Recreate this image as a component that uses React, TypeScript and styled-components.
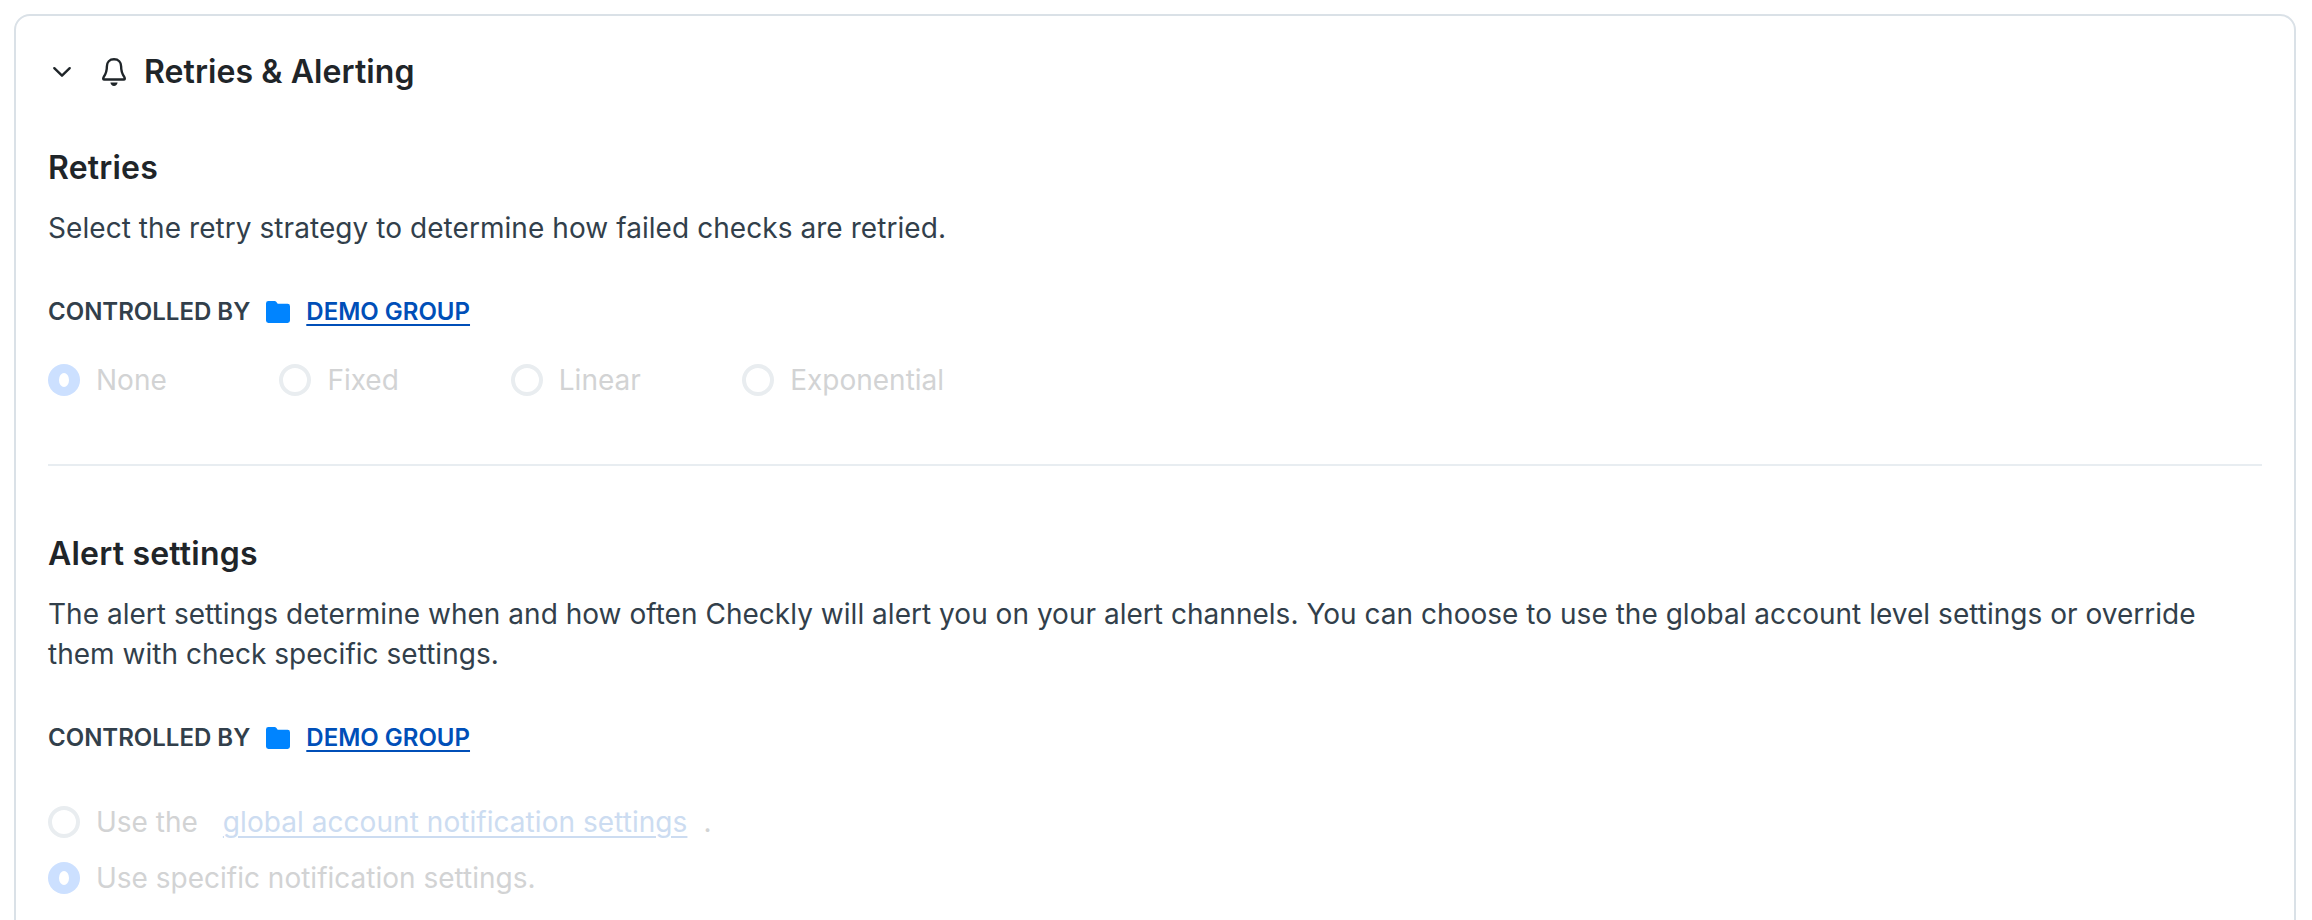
import React from 'react';
import styled, { createGlobalStyle } from 'styled-components';

const GlobalStyle = createGlobalStyle`
  *, *::before, *::after { box-sizing: border-box; }
  body {
    margin: 0;
    background: #fff;
    color: #323f4b;
    font-family: Inter, sans-serif;
    font-size: 28px;
    line-height: 40px;
    -webkit-font-smoothing: antialiased;
  }
`;

const Page = styled.main`
  height: 920px;
  padding: 14px 16px 0 14px;
  overflow: hidden;
`;

const Card = styled.section`
  height: 1000px;
  padding: 36px 32px;
  border: 2px solid #dae1e7;
  border-radius: 16px;
`;

const CardHeader = styled.header`
  display: flex;
  align-items: center;
  height: 40px;
  color: #1f2529;
`;

const ChevronIcon = styled.svg`
  width: 28px;
  height: 28px;
  margin-right: 24px;
`;

const BellIcon = styled.svg`
  width: 28px;
  height: 32px;
  margin-right: 16px;
`;

const Title = styled.h2`
  margin: 0;
  font-size: 32px;
  font-weight: 600;
  line-height: 40px;
  letter-spacing: 0.08px;
`;

const Group = styled.section<{ $top: number }>`
  padding-top: ${(p) => p.$top}px;
`;

const GroupTitle = styled.h3`
  margin: 0 0 20px;
  color: #1f2529;
  font-size: 32px;
  font-weight: 600;
  line-height: 40px;
  letter-spacing: 0.2px;
`;

const Description = styled.p<{ $tracking: number }>`
  margin: 0;
  letter-spacing: ${(p) => p.$tracking}px;
`;

const Controlled = styled.div`
  display: flex;
  align-items: center;
  height: 32px;
  margin-top: 48px;
  font-size: 24px;
  font-weight: 600;
  line-height: 32px;
`;

const FolderIcon = styled.svg`
  width: 24px;
  height: 22px;
  margin: 0 16px;
  fill: #0084ff;
`;

const GroupLink = styled.a`
  color: #004fb8;
  text-decoration: underline;
  text-decoration-thickness: 2px;
  text-underline-offset: 4px;
`;

const InlineOptions = styled.div`
  display: grid;
  grid-template-columns: repeat(4, 231.4px);
  margin-top: 36px;
`;

const StackedOptions = styled.div`
  display: grid;
  gap: 24px;
  margin-top: 52px;
`;

const Option = styled.label`
  display: flex;
  align-items: center;
  gap: 16px;
  height: 32px;
  color: #d2d3d4;
  white-space: nowrap;
`;

const Radio = styled.span<{ $checked?: boolean }>`
  display: flex;
  align-items: center;
  justify-content: center;
  flex: none;
  width: 32px;
  height: 32px;
  border: ${(p) => (p.$checked ? 'none' : '4px solid #e9edf0')};
  border-radius: 50%;
  background: ${(p) => (p.$checked ? '#cce0ff' : '#fff')};

  &::after {
    content: '';
    display: ${(p) => (p.$checked ? 'block' : 'none')};
    width: 10px;
    height: 14px;
    border-radius: 50%;
    background: #fff;
  }
`;

const SettingsLink = styled.a`
  margin-left: 9px;
  color: #ccdcf1;
  letter-spacing: 0.05px;
  text-decoration: underline;
  text-decoration-thickness: 2px;
  text-underline-offset: 4px;
`;

const Divider = styled.hr`
  height: 2px;
  margin: 68px 0 0;
  border: 0;
  background: #e8edf1;
`;

const ControlledBy = () => (
  <Controlled>
    <span>CONTROLLED BY</span>
    <FolderIcon viewBox="0 0 24 22">
      <path d="M2.4 0H8.6Q9.6 0 10.2 .8L11.7 2.8H21.6Q24 2.8 24 5.2V19.6Q24 22 21.6 22H2.4Q0 22 0 19.6V2.4Q0 0 2.4 0Z" />
    </FolderIcon>
    <GroupLink>DEMO GROUP</GroupLink>
  </Controlled>
);

const strategies = ['None', 'Fixed', 'Linear', 'Exponential'];

export default function App() {
  return (
    <>
      <GlobalStyle />
      <Page>
        <Card>
          <CardHeader>
            <ChevronIcon viewBox="0 0 28 28" fill="none" stroke="currentColor" strokeWidth="2.4" strokeLinecap="round" strokeLinejoin="round">
              <path d="M6.3 10.2 14 17.7 21.7 10.2" />
            </ChevronIcon>
            <BellIcon viewBox="0 0 28 32" fill="none" stroke="currentColor" strokeWidth="2.4" strokeLinejoin="round">
              <path d="M14 3.2C9.6 3.2 6.9 6.2 6.9 10.3C6.9 16.2 5.6 18.4 3.7 21Q2.4 23.5 4.4 23.5H23.6Q25.6 23.5 24.3 21C22.4 18.4 21.1 16.2 21.1 10.3C21.1 6.2 18.4 3.2 14 3.2Z" />
              <path d="M10.4 26.5H17.6C17.2 28.7 16 30 14 30S10.8 28.7 10.4 26.5Z" fill="currentColor" stroke="none" />
            </BellIcon>
            <Title>Retries &amp; Alerting</Title>
          </CardHeader>

          <Group $top={56}>
            <GroupTitle>Retries</GroupTitle>
            <Description $tracking={0.06}>
              Select the retry strategy to determine how failed checks are retried.
            </Description>
            <ControlledBy />
            <InlineOptions>
              {strategies.map((name, i) => (
                <Option key={name}>
                  <Radio $checked={i === 0} />
                  <span>{name}</span>
                </Option>
              ))}
            </InlineOptions>
          </Group>

          <Divider />

          <Group $top={68}>
            <GroupTitle>Alert settings</GroupTitle>
            <Description $tracking={0.025}>
              The alert settings determine when and how often Checkly will alert you on your alert channels. You can
              choose to use the global account level settings or override them with check specific settings.
            </Description>
            <ControlledBy />
            <StackedOptions>
              <Option>
                <Radio />
                <span>Use the</span>
                <SettingsLink>global account notification settings</SettingsLink>
                <span>.</span>
              </Option>
              <Option>
                <Radio $checked />
                <span>Use specific notification settings.</span>
              </Option>
            </StackedOptions>
          </Group>
        </Card>
      </Page>
    </>
  );
}
